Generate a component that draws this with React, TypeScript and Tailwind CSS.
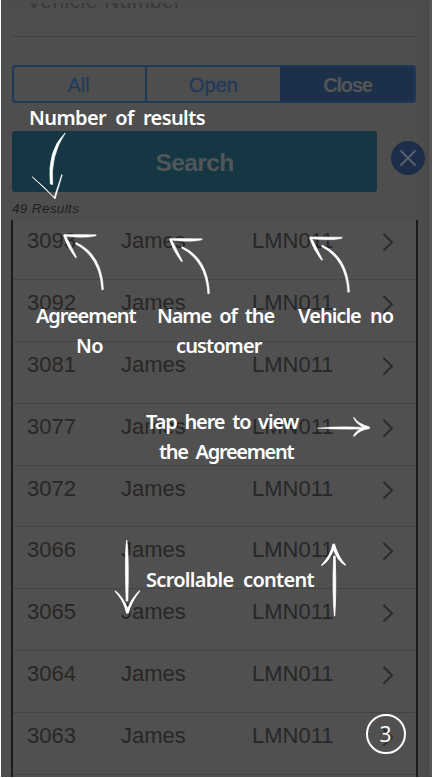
import React from 'react';

const rows = ['3093', '3092', '3081', '3077', '3072', '3066', '3065', '3064', '3063'];

function Note({ children, place }: { children: React.ReactNode; place: string }) {
  return (
    <div
      className={`absolute whitespace-nowrap font-['Noto_Sans',sans-serif] text-[20px] font-semibold leading-[28px] text-white ${place}`}
    >
      {children}
    </div>
  );
}

function Row({ id, first }: { id: string; first: boolean }) {
  return (
    <div
      className={`flex shrink-0 items-start border-b border-[#444] pl-[14px] text-[22px] leading-[26px] text-[#272727] ${first ? 'h-[60px] pt-[8px]' : 'h-[61.85px] pt-[10px]'}`}
    >
      <span className="w-[94px]">{id}</span>
      <span className="w-[131px]">James</span>
      <span className="w-[130px]">LMN011</span>
      <svg className="mt-[4px] h-[20px] w-[12px]" viewBox="0 0 12 20" fill="none" stroke="#292929" strokeWidth="1.9">
        <path d="M1.5 2 10 10.3 1.5 18.6" />
      </svg>
    </div>
  );
}

function CurvedArrow({ x, y }: { x: number; y: number }) {
  return (
    <g transform={`translate(${x} ${y})`} stroke="white" strokeWidth=".5">
      <path d="M0-.6 32-.3Q33 .6 31 1.1Q19 3.5 2 1.2L12.6 22.2 11.6 22.8Q3 12-.6.2Z" />
      <path d="M12 7.6Q38 19 39.5 54.5L37.8 54.8Q36 22 11.5 9Z" />
    </g>
  );
}

export default function App() {
  return (
    <div className="relative h-[778px] w-[432px] overflow-hidden bg-white pl-px font-['Liberation_Sans',Arial,sans-serif]">
      <div className="flex h-[777px] w-full flex-col border-r-[3px] border-[#545454] bg-[#4e4e4e] pl-[11px] shadow-[inset_-5px_0_6px_-2px_#484848]">
        <div className="h-[3px] w-full shrink-0" />
        <div className="h-[33px] shrink-0 overflow-hidden pl-[15px] text-[21px] leading-[24px] tracking-[0.45px] text-[#383838]">
          <div className="-mt-[14px]">Vehicle Number</div>
        </div>
        <div className="h-px w-[406px] shrink-0 bg-[#434343]" />
        <div className="mt-[28px] flex h-[38px] w-[404px] shrink-0 overflow-hidden rounded-[4px] border-2 border-[#1e385a] text-[20px] leading-[37px] text-[#20395b]">
          <div className="w-[133px] border-r-2 border-[#1e385a] pr-[2px] text-center">All</div>
          <div className="w-[133px] text-center [-webkit-text-stroke:0.3px_#20395b]">Open</div>
          <div className="flex-1 bg-[#1d3049] pl-[1px] text-center font-bold tracking-[-1.2px] text-[#555]">Close</div>
        </div>
        <div className="mt-[28px] flex h-[61px] shrink-0 items-center">
          <div className="flex h-[61px] w-[365px] items-center justify-center rounded-[3px] bg-[#153744] pt-[3px] text-[24.5px] font-bold tracking-[-0.6px] text-[#505658]">
            Search
          </div>
          <div className="ml-[14px] -mt-[8px] flex size-[34px] items-center justify-center rounded-full bg-[#1d2e4a]">
            <svg className="size-[18px]" viewBox="0 0 18 18" stroke="#5b626d" strokeWidth="1.8">
              <path d="m1.5 1.5 15 15m0-15-15 15" />
            </svg>
          </div>
        </div>
        <div className="h-[28px] shrink-0 pt-[9px] text-[13.5px] italic leading-[16px] tracking-[0.35px] text-[#202020]">
          49 Results
        </div>
        <div className="-ml-px flex h-[557px] w-[407px] flex-col overflow-hidden border-x-2 border-[#1b1b1b] bg-[#505050]">
          {rows.map((id, index) => (
            <Row key={id} id={id} first={index === 0} />
          ))}
        </div>
      </div>

      <svg className="absolute inset-0 h-[778px] w-[432px]" viewBox="0 0 432 778" fill="white">
        <path d="M65.2 133Q47 150 50.3 184L52.7 184.5Q50 156 65.2 133Z" stroke="white" strokeWidth=".7" />
        <path d="M32.2 176.8 54.2 197.5 61.8 174.6 62.2 175 55 199Q46 188 32.2 176.8Z" stroke="white" strokeWidth=".7" />
        <CurvedArrow x={64} y={235} />
        <CurvedArrow x={170} y={239} />
        <CurvedArrow x={310} y={237.5} />
        <path d="M317 428.2Q338 425.8 365 427.4L365 429Q338 429.6 317 428.2Z" stroke="white" strokeWidth=".4" />
        <path d="M354 417.4Q358 424 369.5 427L369.5 428.5Q359 430 354.4 436.3L353.5 436Q356 430 364.5 427.8Q356 424 353.6 417.6Z" stroke="white" strokeWidth=".8" />
        <path d="M126.7 540Q129 554 127.8 601L126.2 601Q124.5 554 126.7 540Z" stroke="white" strokeWidth=".8" />
        <path d="M115 591Q122 596 127.7 609Q132 598 139.8 590.7Q131 602 128.2 613L126.6 613Q124 600 115 591Z" stroke="white" strokeWidth="1.1" />
        <path d="M334.4 616Q332.1 591 333.7 556L335.2 556Q336.5 591 334.8 616Z" stroke="white" strokeWidth=".8" />
        <path d="M321.4 557 M321.4 565.6Q331 555 333 544.3L334.5 544.3Q338 557 345.8 565.4Q337 560 333.7 549Q329 561 321.4 565.6Z" stroke="white" strokeWidth="1.1" />
      </svg>

      <Note place="left-[29px] top-[104px] tracking-[-0.6px] [word-spacing:4.5px]">Number of results</Note>
      <Note place="left-[36px] top-[302px] tracking-[-1.1px]">Agreement</Note>
      <Note place="left-[76px] top-[332px] tracking-[-0.5px]">No</Note>
      <Note place="left-[157px] top-[302px] tracking-[-1.1px] [word-spacing:4px]">Name of the</Note>
      <Note place="left-[176px] top-[332px] tracking-[-0.9px]">customer</Note>
      <Note place="left-[298px] top-[302px] tracking-[-1px] [word-spacing:5px]">Vehicle no</Note>
      <Note place="left-[146px] top-[408px] tracking-[-1.1px] [word-spacing:3.6px]">Tap here to view</Note>
      <Note place="left-[159px] top-[438px] tracking-[-1.3px] [word-spacing:4px]">the Agreement</Note>
      <Note place="left-[146px] top-[566px] tracking-[-0.7px] [word-spacing:5px]">Scrollable content</Note>

      <div className="absolute left-[366px] top-[714px] flex size-[40px] items-center justify-center rounded-full border-2 border-white pr-[1px] font-['Open_Sans',sans-serif] text-[21px] leading-none text-white">
        3
      </div>
    </div>
  );
}
